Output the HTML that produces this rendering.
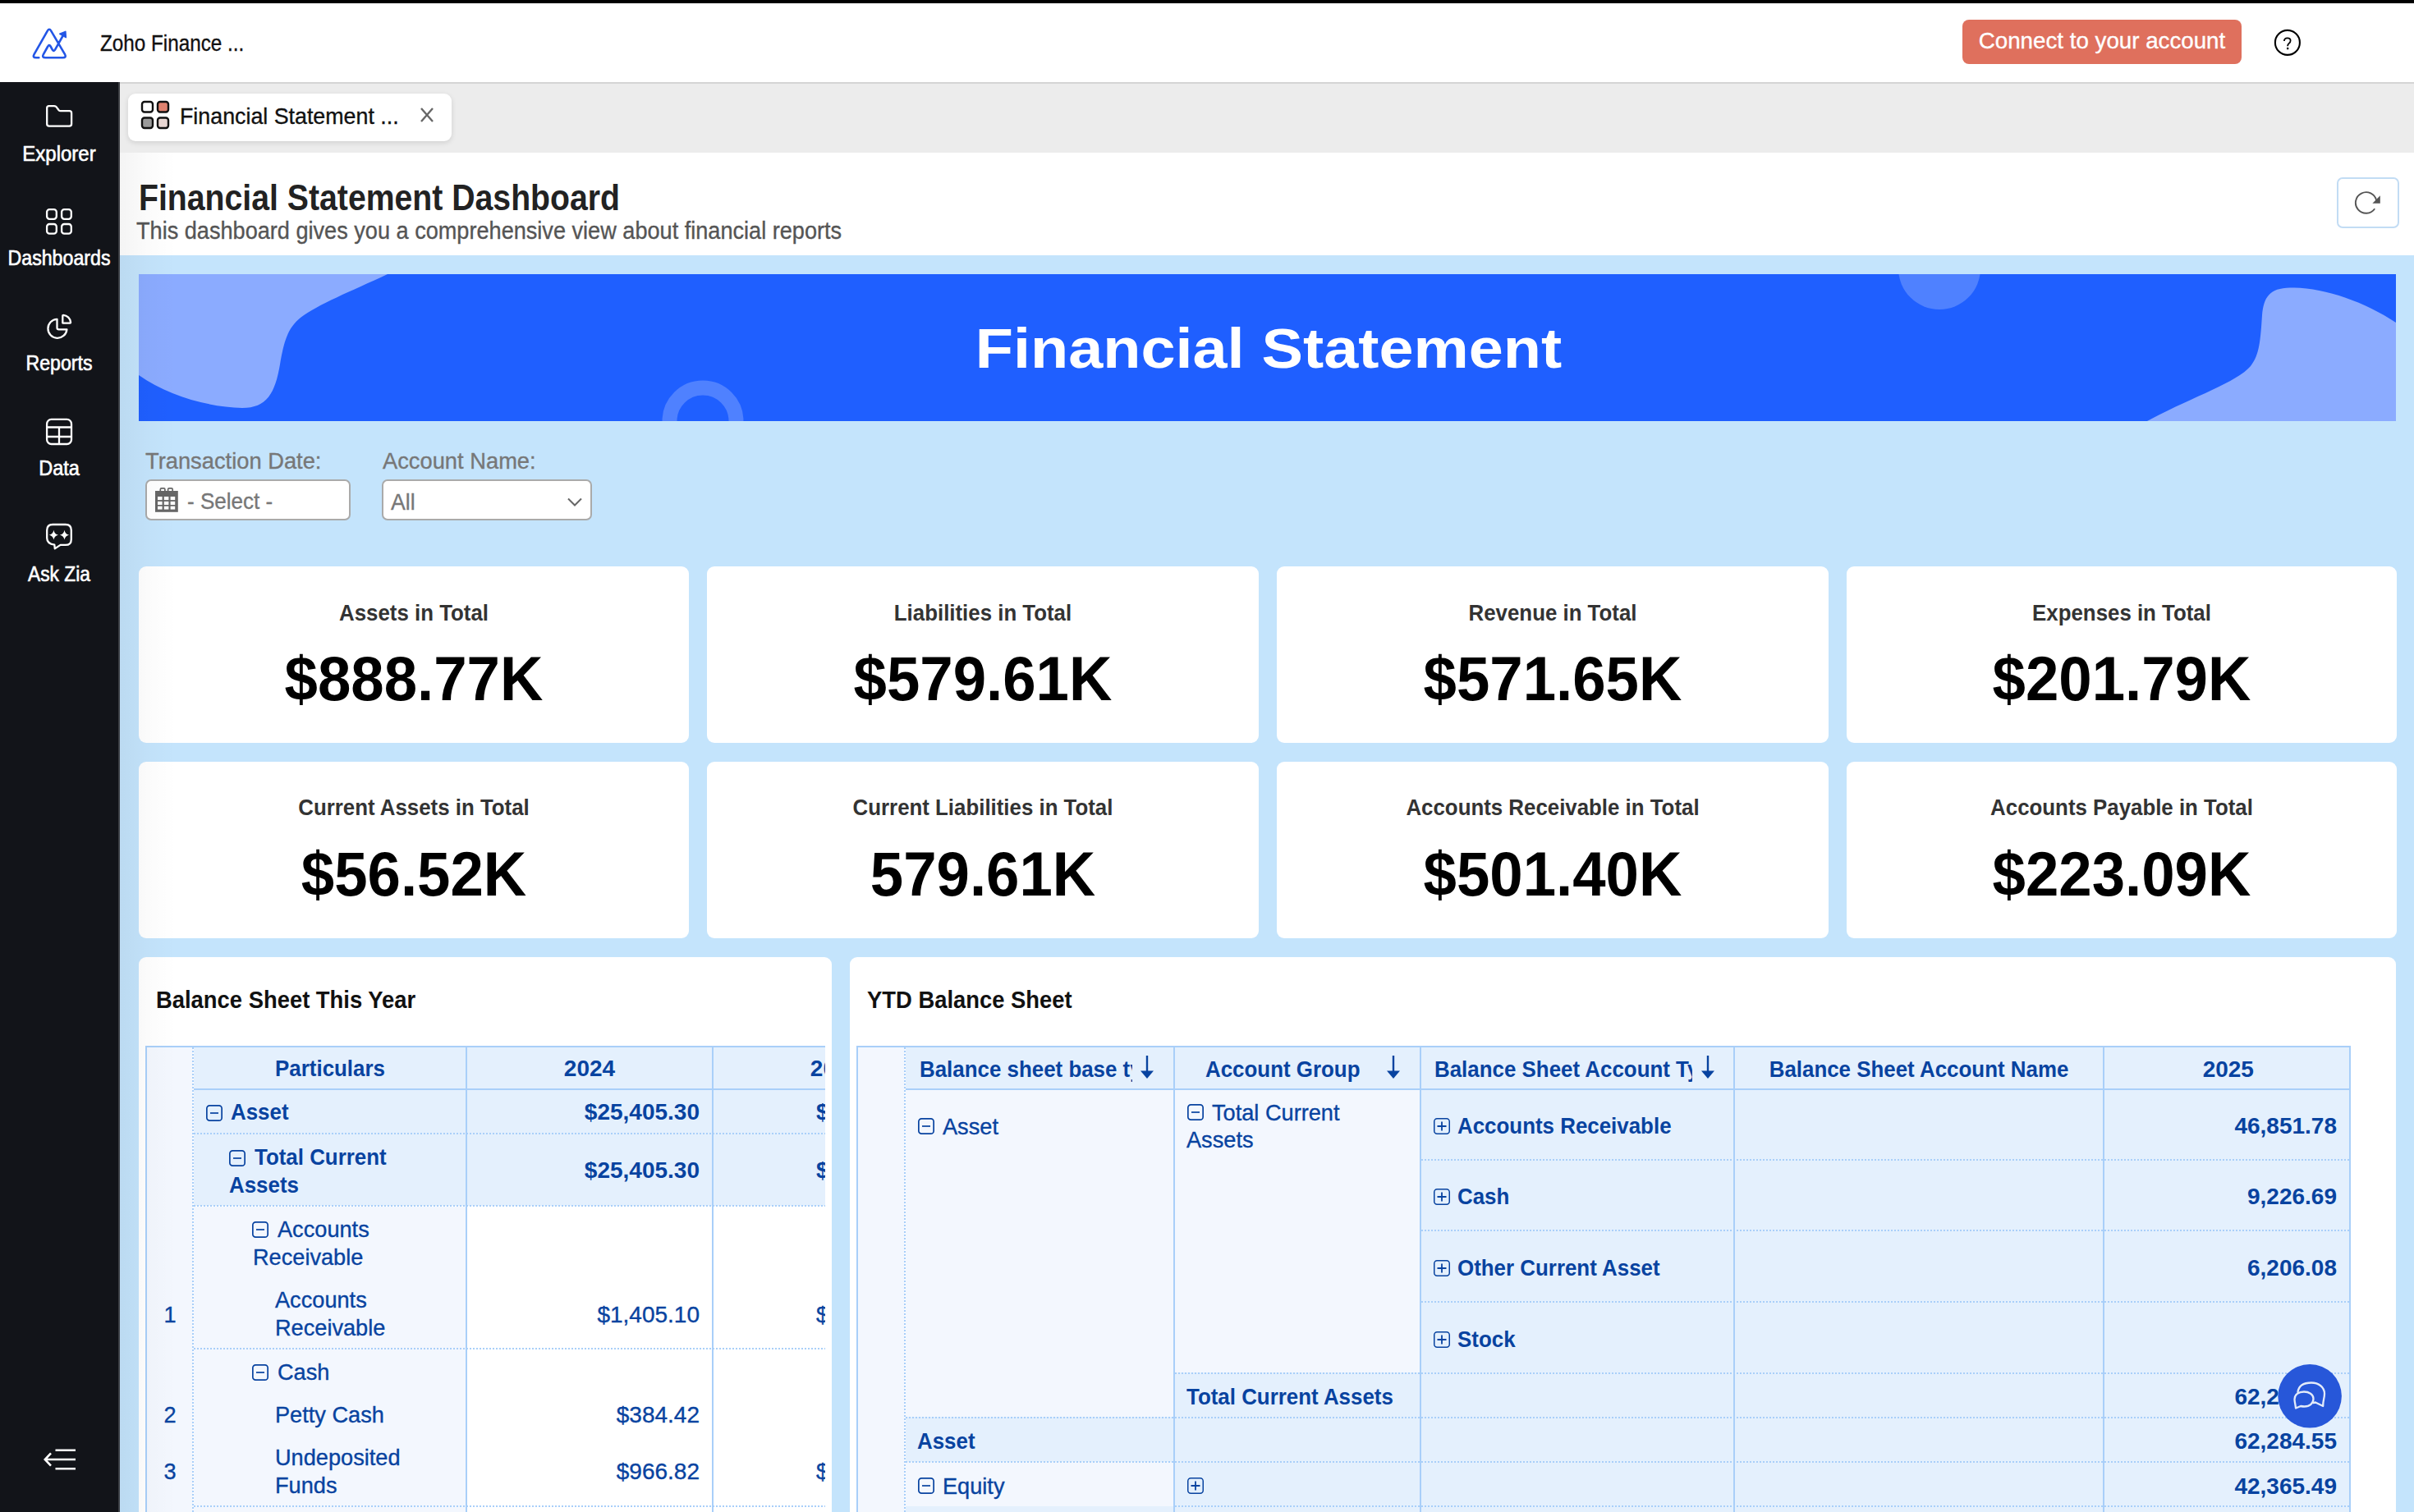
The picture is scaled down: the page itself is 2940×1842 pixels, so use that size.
<!DOCTYPE html>
<html><head><meta charset="utf-8"><title>Financial Statement Dashboard</title>
<style>
html,body{margin:0;padding:0;}
body{width:2940px;height:1842px;overflow:hidden;position:relative;background:#fff;font-family:"Liberation Sans",sans-serif;}
.t{position:absolute;white-space:nowrap;line-height:1;}
.r{position:absolute;box-sizing:border-box;}
svg{position:absolute;overflow:visible;}
</style></head><body>

<div class="r" style="left:0px;top:0px;width:2940px;height:4px;background:#000;"></div>
<div class="r" style="left:0px;top:100px;width:2940px;height:2px;background:#d4d4d4;"></div>
<svg style="left:0;top:0" width="140" height="100" viewBox="0 0 140 100">
<g fill="none" stroke="#2356e6" stroke-width="2.6" stroke-linejoin="round" stroke-linecap="round">
<path d="M47.3 70.3 L44 70.3 Q39.2 70.3 41.6 66.2 L57.8 37.6 Q60 34 62.2 37.6 L79 66.2 Q81.3 70.3 76.5 70.3 L55.5 70.3 Q50.6 70.3 52.9 66.2 L58 57 Q59.8 53.5 61.6 56.5 L64 60.8 Q65.5 63 67 60.6 L77.5 42"/>
</g>
<path d="M79.8 38.4 L72.8 41.3 L80.3 45.6 Z" fill="#2356e6" stroke="#2356e6" stroke-width="1.6" stroke-linejoin="round"/>
</svg>
<div class="t" style="left:122.0px;top:39.3px;font-size:28px;-webkit-text-stroke:0.35px #111;color:#111;transform-origin:0 0;transform:scaleX(0.866);">Zoho Finance ...</div>
<div class="r" style="left:2390px;top:24px;width:340px;height:54px;background:#df705d;border-radius:8px;"></div>
<div class="t" style="left:2560.0px;top:36.3px;font-size:28px;-webkit-text-stroke:0.35px #fff;color:#fff;transform:translateX(-50%) scaleX(0.99);">Connect to your account</div>
<svg style="left:2766px;top:32px" width="40" height="40" viewBox="0 0 40 40">
<circle cx="19.9" cy="19.9" r="15" fill="none" stroke="#000" stroke-width="2.1"/>
<path d="M15.9 18 Q16 14.3 19.8 14.3 Q23.6 14.3 23.6 17.6 Q23.6 19.7 21.6 21 Q20.1 22.2 20.1 24.3" fill="none" stroke="#000" stroke-width="1.8"/>
<rect x="19" y="25.9" width="2.3" height="2.3" fill="#000"/>
</svg>
<div class="r" style="left:0px;top:100px;width:144px;height:1742px;background:#121419;"></div>
<div class="r" style="left:144px;top:100px;width:2px;height:1742px;background:#3b3d42;"></div>
<div class="t" style="left:72.0px;top:174.8px;font-size:25px;color:#fff;transform:translateX(-50%) scaleX(0.96);-webkit-text-stroke:0.6px #fff;">Explorer</div>
<div class="t" style="left:72.0px;top:301.8px;font-size:25px;color:#fff;transform:translateX(-50%) scaleX(0.927);-webkit-text-stroke:0.6px #fff;">Dashboards</div>
<div class="t" style="left:72.0px;top:429.8px;font-size:25px;color:#fff;transform:translateX(-50%) scaleX(0.926);-webkit-text-stroke:0.6px #fff;">Reports</div>
<div class="t" style="left:72.0px;top:557.8px;font-size:25px;color:#fff;transform:translateX(-50%) scaleX(0.94);-webkit-text-stroke:0.6px #fff;">Data</div>
<div class="t" style="left:72.0px;top:686.8px;font-size:25px;color:#fff;transform:translateX(-50%) scaleX(0.91);-webkit-text-stroke:0.6px #fff;">Ask Zia</div>
<svg style="left:0;top:0" width="146" height="1842" viewBox="0 0 146 1842">
<g fill="none" stroke="#fff" stroke-width="2.3" stroke-linejoin="round" stroke-linecap="round">
<path d="M59.6 129.1 L65.8 129.1 Q67.2 129.1 68.3 129.9 L71.6 134.2 Q72.4 135.1 73.8 135.1 L84.5 135.1 Q87.1 135.1 87.1 137.7 L87.1 151.1 Q87.1 153.7 84.5 153.7 L59.8 153.7 Q57.2 153.7 57.2 151.1 L57.2 131.6 Q57.2 129.1 59.6 129.1 Z"/>
<rect x="57.1" y="255.1" width="11.7" height="11.7" rx="3.2"/><rect x="75.1" y="255.1" width="11.7" height="11.7" rx="3.2"/>
<rect x="57.1" y="273" width="11.7" height="11.7" rx="3.2"/><rect x="75.1" y="273" width="11.7" height="11.7" rx="3.2"/>
<path d="M69.5 388.8 A11.5 11.5 0 1 0 81.4 401.3 L71.6 401.3 Q69.5 401.3 69.5 399.2 Z"/>
<path d="M76.3 393.6 L76.3 384.6 Q76.3 383.8 77.1 383.8 A9.8 9.8 0 0 1 86.1 392.8 Q86.1 393.6 85.3 393.6 Z"/>
<rect x="57.1" y="510.9" width="29.9" height="30.1" rx="5.5"/>
<path d="M57.1 520.5 L87 520.5 M72 520.5 L72 541 M57.1 532 L87 532" stroke-linecap="butt"/>
<path d="M64.2 639 L79.8 639 Q86.8 639 86.8 646 L86.8 656.9 Q86.8 663.9 79.8 663.9 L73.6 663.9 L66.8 668.4 L66.3 663.6 Q57.2 662.4 57.2 655.4 L57.2 646 Q57.2 639 64.2 639 Z"/>
<path d="M55 1778 L92 1778 M67.5 1766.7 L92 1766.7 M67.5 1789.3 L92 1789.3 M62 1770.3 L54.8 1778 L62 1785.7" stroke-width="2.6" stroke-linecap="butt" stroke-linejoin="miter"/>
</g>
<g fill="#fff">
<path d="M65.4 645.8 Q66.2 650.8 71 651.7 Q66.2 652.6 65.4 657.6 Q64.6 652.6 59.8 651.7 Q64.6 650.8 65.4 645.8 Z"/>
<path d="M78.5 645.8 Q79.3 650.8 84.1 651.7 Q79.3 652.6 78.5 657.6 Q77.7 652.6 72.9 651.7 Q77.7 650.8 78.5 645.8 Z"/>
</g>
</svg>
<div class="r" style="left:146px;top:102px;width:2794px;height:84px;background:#ececec;"></div>
<div class="r" style="left:156px;top:114px;width:394px;height:58px;background:#fff;border-radius:9px;box-shadow:0 2px 6px rgba(0,0,0,0.12);"></div>
<svg style="left:0;top:0" width="560" height="180" viewBox="0 0 560 180">
<g stroke="#111" stroke-width="2.4">
<rect x="173" y="124" width="13" height="12.5" rx="3" fill="#fff"/>
<rect x="192" y="124" width="13" height="12.5" rx="3" fill="#e0826f"/>
<rect x="173" y="143.5" width="13" height="12.5" rx="3" fill="#9a9a9a"/>
<rect x="192" y="143.5" width="13" height="12.5" rx="3" fill="#e8d6d2"/>
</g>
<path d="M513 132 L527 148 M527 132 L513 148" stroke="#666" stroke-width="2.4"/>
</svg>
<div class="t" style="left:219.0px;top:127.7px;font-size:28px;-webkit-text-stroke:0.35px #111;color:#111;transform-origin:0 0;transform:scaleX(0.957);">Financial Statement ...</div>
<div class="t" style="left:169.0px;top:219.1px;font-size:44px;font-weight:700;color:#222;transform-origin:0 0;transform:scaleX(0.891);">Financial Statement Dashboard</div>
<div class="t" style="left:166.0px;top:267.4px;font-size:29px;-webkit-text-stroke:0.35px #555;color:#555;transform-origin:0 0;transform:scaleX(0.935);">This dashboard gives you a comprehensive view about financial reports</div>
<div class="r" style="left:2846px;top:216px;width:76px;height:62px;border:2px solid #c2dcf4;border-radius:7px;background:#fff;"></div>
<svg style="left:2846px;top:216px" width="76" height="62" viewBox="0 0 76 62">
<path d="M46.2 38.3 A12.8 12.8 0 1 1 48.2 28.3" fill="none" stroke="#555" stroke-width="1.9"/>
<path d="M52.8 22.3 L43.4 31.7 L52.8 31.7 Z" fill="#555"/>
</svg>
<div class="r" style="left:146px;top:311px;width:2794px;height:1531px;background:#c4e4fc;"></div>
<svg style="left:169px;top:334px" width="2749" height="179" viewBox="0 0 2749 179">
<defs><clipPath id="bc"><rect x="0" y="0" width="2749" height="179"/></clipPath></defs>
<rect x="0" y="0" width="2749" height="179" fill="#1f5fff"/>
<g clip-path="url(#bc)">
<path d="M0 0 L303 0 C258 21 218 37 197 53 C181 66 177 82 172 110 C166 145 156 163 126 163 C85 162 35 148 0 123 Z" fill="#8babff"/>
<circle cx="2193" cy="-7" r="50" fill="#4f81ff"/>
<path d="M2749 59 C2710 33 2660 16 2620 16.5 C2595 17 2588 28 2586 50 C2584 80 2583 98 2572 112 C2555 132 2500 150 2446 179 L2749 179 Z" fill="#8babff"/>
<circle cx="687" cy="179" r="40.5" fill="none" stroke="#4f81ff" stroke-width="18"/>
</g>
</svg>
<div class="t" style="left:1545.2px;top:390.2px;font-size:68px;font-weight:700;color:#fff;transform:translateX(-50%) scaleX(1.112);">Financial Statement</div>
<div class="t" style="left:177.0px;top:548.0px;font-size:28px;-webkit-text-stroke:0.35px #777;color:#777;transform-origin:0 0;transform:scaleX(0.975);">Transaction Date:</div>
<div class="t" style="left:465.6px;top:548.0px;font-size:28px;-webkit-text-stroke:0.35px #777;color:#777;transform-origin:0 0;transform:scaleX(0.975);">Account Name:</div>
<div class="r" style="left:177px;top:584px;width:250px;height:50px;background:#fff;border:2px solid #aaa;border-radius:7px;"></div>
<div class="r" style="left:465px;top:584px;width:256px;height:50px;background:#fff;border:2px solid #aaa;border-radius:7px;"></div>
<svg style="left:0;top:0" width="740" height="700" viewBox="0 0 740 700">
<rect x="189" y="598" width="27.8" height="25.8" fill="#666"/>
<path d="M195.3 598.5 L195.3 596.2 Q195.3 594.8 196.7 594.8 L199.5 594.8 Q200.9 594.8 200.9 596.2 L200.9 598.5 M204.6 598.5 L204.6 596.2 Q204.6 594.8 206 594.8 L208.8 594.8 Q210.2 594.8 210.2 596.2 L210.2 598.5" fill="none" stroke="#666" stroke-width="1.7"/>
<g fill="#fff">
<rect x="192" y="605" width="5.6" height="4.1"/><rect x="199.8" y="605" width="5.6" height="4.1"/><rect x="207.6" y="605" width="5.6" height="4.1"/>
<rect x="192" y="610.9" width="5.6" height="4.1"/><rect x="199.8" y="610.9" width="5.6" height="4.1"/><rect x="207.6" y="610.9" width="5.6" height="4.1"/>
<rect x="192" y="616.7" width="5.6" height="3.9"/><rect x="199.8" y="616.7" width="5.6" height="3.9"/><rect x="207.6" y="616.7" width="5.6" height="3.9"/>
</g>
<path d="M692 607.5 L700 615.5 L708 607.5" fill="none" stroke="#666" stroke-width="2"/>
</svg>
<div class="t" style="left:227.5px;top:597.1px;font-size:28px;-webkit-text-stroke:0.35px #777;color:#777;transform-origin:0 0;transform:scaleX(0.93);">- Select -</div>
<div class="t" style="left:475.6px;top:597.6px;font-size:28px;-webkit-text-stroke:0.35px #777;color:#777;transform-origin:0 0;transform:scaleX(0.95);">All</div>
<div class="r" style="left:169px;top:690px;width:670px;height:215px;background:#fff;border-radius:9px;"></div>
<div class="t" style="left:504.0px;top:732.9px;font-size:28px;font-weight:700;color:#333;transform:translateX(-50%) scaleX(0.923);">Assets in Total</div>
<div class="t" style="left:504.0px;top:789.1px;font-size:76px;font-weight:700;color:#000;transform:translateX(-50%) scaleX(0.955);">$888.77K</div>
<div class="r" style="left:861px;top:690px;width:672px;height:215px;background:#fff;border-radius:9px;"></div>
<div class="t" style="left:1197.0px;top:732.9px;font-size:28px;font-weight:700;color:#333;transform:translateX(-50%) scaleX(0.923);">Liabilities in Total</div>
<div class="t" style="left:1197.0px;top:789.1px;font-size:76px;font-weight:700;color:#000;transform:translateX(-50%) scaleX(0.955);">$579.61K</div>
<div class="r" style="left:1555px;top:690px;width:672px;height:215px;background:#fff;border-radius:9px;"></div>
<div class="t" style="left:1891.0px;top:732.9px;font-size:28px;font-weight:700;color:#333;transform:translateX(-50%) scaleX(0.923);">Revenue in Total</div>
<div class="t" style="left:1891.0px;top:789.1px;font-size:76px;font-weight:700;color:#000;transform:translateX(-50%) scaleX(0.955);">$571.65K</div>
<div class="r" style="left:2249px;top:690px;width:670px;height:215px;background:#fff;border-radius:9px;"></div>
<div class="t" style="left:2584.0px;top:732.9px;font-size:28px;font-weight:700;color:#333;transform:translateX(-50%) scaleX(0.923);">Expenses in Total</div>
<div class="t" style="left:2584.0px;top:789.1px;font-size:76px;font-weight:700;color:#000;transform:translateX(-50%) scaleX(0.955);">$201.79K</div>
<div class="r" style="left:169px;top:928px;width:670px;height:215px;background:#fff;border-radius:9px;"></div>
<div class="t" style="left:504.0px;top:970.3px;font-size:28px;font-weight:700;color:#333;transform:translateX(-50%) scaleX(0.923);">Current Assets in Total</div>
<div class="t" style="left:504.0px;top:1026.9px;font-size:76px;font-weight:700;color:#000;transform:translateX(-50%) scaleX(0.955);">$56.52K</div>
<div class="r" style="left:861px;top:928px;width:672px;height:215px;background:#fff;border-radius:9px;"></div>
<div class="t" style="left:1197.0px;top:970.3px;font-size:28px;font-weight:700;color:#333;transform:translateX(-50%) scaleX(0.923);">Current Liabilities in Total</div>
<div class="t" style="left:1197.0px;top:1026.9px;font-size:76px;font-weight:700;color:#000;transform:translateX(-50%) scaleX(0.955);">579.61K</div>
<div class="r" style="left:1555px;top:928px;width:672px;height:215px;background:#fff;border-radius:9px;"></div>
<div class="t" style="left:1891.0px;top:970.3px;font-size:28px;font-weight:700;color:#333;transform:translateX(-50%) scaleX(0.923);">Accounts Receivable in Total</div>
<div class="t" style="left:1891.0px;top:1026.9px;font-size:76px;font-weight:700;color:#000;transform:translateX(-50%) scaleX(0.955);">$501.40K</div>
<div class="r" style="left:2249px;top:928px;width:670px;height:215px;background:#fff;border-radius:9px;"></div>
<div class="t" style="left:2584.0px;top:970.3px;font-size:28px;font-weight:700;color:#333;transform:translateX(-50%) scaleX(0.923);">Accounts Payable in Total</div>
<div class="t" style="left:2584.0px;top:1026.9px;font-size:76px;font-weight:700;color:#000;transform:translateX(-50%) scaleX(0.955);">$223.09K</div>
<div class="r" style="left:169px;top:1166px;width:844px;height:734px;background:#fff;border-radius:9px;"></div>
<div class="r" style="left:1035px;top:1166px;width:1883px;height:734px;background:#fff;border-radius:9px;"></div>
<div class="t" style="left:190.0px;top:1202.6px;font-size:30px;font-weight:700;color:#111;transform-origin:0 0;transform:scaleX(0.913);">Balance Sheet This Year</div>
<div class="t" style="left:1056.0px;top:1203.1px;font-size:30px;font-weight:700;color:#111;transform-origin:0 0;transform:scaleX(0.913);">YTD Balance Sheet</div>
<div style="position:absolute;left:0;top:0;width:1005px;height:1842px;overflow:hidden;">
<div class="r" style="left:179px;top:1276px;width:56px;height:566px;background:#f3f7fe;"></div>
<div class="r" style="left:236px;top:1276px;width:964px;height:50px;background:#e4f0fd;"></div>
<div class="r" style="left:236px;top:1328px;width:964px;height:141px;background:#e4f0fd;"></div>
<div class="r" style="left:236px;top:1470px;width:331px;height:372px;background:#f3f7fe;"></div>
<div class="r" style="left:177px;top:1274px;width:2px;height:568px;background:#a9cff9;"></div>
<div class="r" style="left:177px;top:1274px;width:1023px;height:2px;background:#a9cff9;"></div>
<div class="r" style="left:234px;top:1276px;width:2px;height:566px;background:repeating-linear-gradient(180deg,#a9cff9 0 2px,transparent 2px 4px);"></div>
<div class="r" style="left:236px;top:1326px;width:964px;height:2px;background:#a9cff9;"></div>
<div class="r" style="left:567px;top:1276px;width:2px;height:566px;background:#a9cff9;"></div>
<div class="r" style="left:867px;top:1276px;width:2px;height:566px;background:#a9cff9;"></div>
<div class="r" style="left:1167px;top:1276px;width:2px;height:566px;background:#a9cff9;"></div>
<div class="r" style="left:236px;top:1380px;width:964px;height:2px;background:repeating-linear-gradient(90deg,#a9cff9 0 2px,transparent 2px 4px);"></div>
<div class="r" style="left:236px;top:1468px;width:964px;height:2px;background:repeating-linear-gradient(90deg,#a9cff9 0 2px,transparent 2px 4px);"></div>
<div class="r" style="left:236px;top:1642px;width:964px;height:2px;background:repeating-linear-gradient(90deg,#a9cff9 0 2px,transparent 2px 4px);"></div>
<div class="r" style="left:236px;top:1834px;width:964px;height:2px;background:repeating-linear-gradient(90deg,#a9cff9 0 2px,transparent 2px 4px);"></div>
<div class="t" style="left:402.0px;top:1288.3px;font-size:28px;font-weight:700;color:#0843a0;transform:translateX(-50%) scaleX(0.925);">Particulars</div>
<div class="t" style="left:718.0px;top:1288.3px;font-size:28px;font-weight:700;color:#0843a0;transform:translateX(-50%) scaleX(1.0);">2024</div>
<div class="t" style="left:1018.0px;top:1288.3px;font-size:28px;font-weight:700;color:#0843a0;transform:translateX(-50%) scaleX(1.0);">2025</div>
<svg style="left:251px;top:1346px" width="20" height="20" viewBox="0 0 20 20"><rect x="0.85" y="0.85" width="18.3" height="18.3" rx="3.5" fill="none" stroke="#0843a0" stroke-width="1.7"/><path d="M5 10 L15 10" stroke="#0843a0" stroke-width="1.7"/></svg>
<div class="t" style="left:281.0px;top:1341.3px;font-size:28px;font-weight:700;color:#0843a0;transform-origin:0 0;transform:scaleX(0.925);">Asset</div>
<div class="t" style="right:153.0px;top:1341.3px;font-size:28px;font-weight:700;color:#0843a0;">$25,405.30</div>
<div class="t" style="left:994.0px;top:1341.3px;font-size:28px;font-weight:700;color:#0843a0;">$62,284.55</div>
<svg style="left:279px;top:1400.5px" width="20" height="20" viewBox="0 0 20 20"><rect x="0.85" y="0.85" width="18.3" height="18.3" rx="3.5" fill="none" stroke="#0843a0" stroke-width="1.7"/><path d="M5 10 L15 10" stroke="#0843a0" stroke-width="1.7"/></svg>
<div class="t" style="left:309.6px;top:1396.1px;font-size:28px;font-weight:700;color:#0843a0;transform-origin:0 0;transform:scaleX(0.925);">Total Current</div>
<div class="t" style="left:279.4px;top:1430.0px;font-size:28px;font-weight:700;color:#0843a0;transform-origin:0 0;transform:scaleX(0.925);">Assets</div>
<div class="t" style="right:153.0px;top:1412.3px;font-size:28px;font-weight:700;color:#0843a0;">$25,405.30</div>
<div class="t" style="left:994.0px;top:1412.3px;font-size:28px;font-weight:700;color:#0843a0;">$62,284.55</div>
<svg style="left:307px;top:1488.3px" width="20" height="20" viewBox="0 0 20 20"><rect x="0.85" y="0.85" width="18.3" height="18.3" rx="3.5" fill="none" stroke="#0843a0" stroke-width="1.7"/><path d="M5 10 L15 10" stroke="#0843a0" stroke-width="1.7"/></svg>
<div class="t" style="left:337.5px;top:1484.0px;font-size:28px;-webkit-text-stroke:0.35px #0843a0;color:#0843a0;transform-origin:0 0;transform:scaleX(0.97);">Accounts</div>
<div class="t" style="left:307.7px;top:1517.6px;font-size:28px;-webkit-text-stroke:0.35px #0843a0;color:#0843a0;transform-origin:0 0;transform:scaleX(0.97);">Receivable</div>
<div class="t" style="left:335.3px;top:1569.7px;font-size:28px;-webkit-text-stroke:0.35px #0843a0;color:#0843a0;transform-origin:0 0;transform:scaleX(0.97);">Accounts</div>
<div class="t" style="left:335.3px;top:1603.8px;font-size:28px;-webkit-text-stroke:0.35px #0843a0;color:#0843a0;transform-origin:0 0;transform:scaleX(0.97);">Receivable</div>
<div class="t" style="left:207.0px;top:1587.8px;font-size:28px;-webkit-text-stroke:0.35px #0843a0;color:#0843a0;transform:translateX(-50%) scaleX(0.97);">1</div>
<div class="t" style="right:153.0px;top:1587.5px;font-size:28px;-webkit-text-stroke:0.35px #0843a0;color:#0843a0;">$1,405.10</div>
<div class="t" style="left:994.0px;top:1587.5px;font-size:28px;-webkit-text-stroke:0.35px #0843a0;color:#0843a0;">$1,405.10</div>
<svg style="left:307px;top:1662px" width="20" height="20" viewBox="0 0 20 20"><rect x="0.85" y="0.85" width="18.3" height="18.3" rx="3.5" fill="none" stroke="#0843a0" stroke-width="1.7"/><path d="M5 10 L15 10" stroke="#0843a0" stroke-width="1.7"/></svg>
<div class="t" style="left:337.5px;top:1658.1px;font-size:28px;-webkit-text-stroke:0.35px #0843a0;color:#0843a0;transform-origin:0 0;transform:scaleX(0.97);">Cash</div>
<div class="t" style="left:335.3px;top:1710.0px;font-size:28px;-webkit-text-stroke:0.35px #0843a0;color:#0843a0;transform-origin:0 0;transform:scaleX(0.97);">Petty Cash</div>
<div class="t" style="left:207.0px;top:1710.0px;font-size:28px;-webkit-text-stroke:0.35px #0843a0;color:#0843a0;transform:translateX(-50%) scaleX(0.97);">2</div>
<div class="t" style="right:153.0px;top:1709.8px;font-size:28px;-webkit-text-stroke:0.35px #0843a0;color:#0843a0;">$384.42</div>
<div class="t" style="left:335.3px;top:1761.9px;font-size:28px;-webkit-text-stroke:0.35px #0843a0;color:#0843a0;transform-origin:0 0;transform:scaleX(0.97);">Undeposited</div>
<div class="t" style="left:335.3px;top:1795.9px;font-size:28px;-webkit-text-stroke:0.35px #0843a0;color:#0843a0;transform-origin:0 0;transform:scaleX(0.97);">Funds</div>
<div class="t" style="left:207.0px;top:1779.1px;font-size:28px;-webkit-text-stroke:0.35px #0843a0;color:#0843a0;transform:translateX(-50%) scaleX(0.97);">3</div>
<div class="t" style="right:153.0px;top:1778.8px;font-size:28px;-webkit-text-stroke:0.35px #0843a0;color:#0843a0;">$966.82</div>
<div class="t" style="left:994.0px;top:1778.8px;font-size:28px;-webkit-text-stroke:0.35px #0843a0;color:#0843a0;">$966.82</div>
</div>
<div class="r" style="left:1045px;top:1276px;width:57px;height:566px;background:#f3f7fe;"></div>
<div class="r" style="left:1103px;top:1276px;width:1759px;height:50px;background:#e4f0fd;"></div>
<div class="r" style="left:1103px;top:1328px;width:327px;height:398px;background:#f3f7fe;"></div>
<div class="r" style="left:1431px;top:1328px;width:299px;height:344px;background:#f3f7fe;"></div>
<div class="r" style="left:1731px;top:1328px;width:1131px;height:344px;background:#e4f0fd;"></div>
<div class="r" style="left:1431px;top:1672px;width:1431px;height:54px;background:#e4f0fd;"></div>
<div class="r" style="left:1103px;top:1726px;width:1759px;height:55px;background:#e4f0fd;"></div>
<div class="r" style="left:1103px;top:1781px;width:327px;height:54px;background:#f3f7fe;"></div>
<div class="r" style="left:1431px;top:1781px;width:1431px;height:54px;background:#e4f0fd;"></div>
<div class="r" style="left:1103px;top:1835px;width:1759px;height:7px;background:#e4f0fd;"></div>
<div class="r" style="left:1043px;top:1274px;width:2px;height:568px;background:#a9cff9;"></div>
<div class="r" style="left:1043px;top:1274px;width:1820px;height:2px;background:#a9cff9;"></div>
<div class="r" style="left:1101px;top:1276px;width:2px;height:566px;background:repeating-linear-gradient(180deg,#a9cff9 0 2px,transparent 2px 4px);"></div>
<div class="r" style="left:1103px;top:1326px;width:1760px;height:2px;background:#a9cff9;"></div>
<div class="r" style="left:1429px;top:1276px;width:2px;height:566px;background:#a9cff9;"></div>
<div class="r" style="left:1729px;top:1276px;width:2px;height:566px;background:#a9cff9;"></div>
<div class="r" style="left:2111px;top:1276px;width:2px;height:566px;background:#a9cff9;"></div>
<div class="r" style="left:2561px;top:1276px;width:2px;height:566px;background:#a9cff9;"></div>
<div class="r" style="left:2861px;top:1276px;width:2px;height:566px;background:#a9cff9;"></div>
<div class="r" style="left:1731px;top:1412px;width:1130px;height:2px;background:repeating-linear-gradient(90deg,#a9cff9 0 2px,transparent 2px 4px);"></div>
<div class="r" style="left:1731px;top:1498px;width:1130px;height:2px;background:repeating-linear-gradient(90deg,#a9cff9 0 2px,transparent 2px 4px);"></div>
<div class="r" style="left:1731px;top:1585px;width:1130px;height:2px;background:repeating-linear-gradient(90deg,#a9cff9 0 2px,transparent 2px 4px);"></div>
<div class="r" style="left:1431px;top:1672px;width:1430px;height:2px;background:repeating-linear-gradient(90deg,#a9cff9 0 2px,transparent 2px 4px);"></div>
<div class="r" style="left:1103px;top:1726px;width:1758px;height:2px;background:repeating-linear-gradient(90deg,#a9cff9 0 2px,transparent 2px 4px);"></div>
<div class="r" style="left:1103px;top:1780px;width:1758px;height:2px;background:repeating-linear-gradient(90deg,#a9cff9 0 2px,transparent 2px 4px);"></div>
<div class="r" style="left:1431px;top:1834px;width:1430px;height:2px;background:repeating-linear-gradient(90deg,#a9cff9 0 2px,transparent 2px 4px);"></div>
<div style="position:absolute;left:1103px;top:1276px;width:276px;height:50px;overflow:hidden;">
<div class="t" style="left:16.5px;top:12.7px;font-size:28px;font-weight:700;color:#0843a0;transform-origin:0 0;transform:scaleX(0.925);">Balance sheet base type</div>
</div>
<svg style="left:1389px;top:1286px" width="16" height="28" viewBox="0 0 16 28"><path d="M8 0 L8 19.5" stroke="#0843a0" stroke-width="2.4"/><path d="M0 18.6 L16 18.6 L8 28 Z" fill="#0843a0"/></svg>
<div class="t" style="left:1468.0px;top:1288.7px;font-size:28px;font-weight:700;color:#0843a0;transform-origin:0 0;transform:scaleX(0.925);">Account Group</div>
<svg style="left:1688.6px;top:1286px" width="16" height="28" viewBox="0 0 16 28"><path d="M8 0 L8 19.5" stroke="#0843a0" stroke-width="2.4"/><path d="M0 18.6 L16 18.6 L8 28 Z" fill="#0843a0"/></svg>
<div style="position:absolute;left:1731px;top:1276px;width:330px;height:50px;overflow:hidden;">
<div class="t" style="left:16.4px;top:12.7px;font-size:28px;font-weight:700;color:#0843a0;transform-origin:0 0;transform:scaleX(0.925);">Balance Sheet Account Type</div>
</div>
<svg style="left:2071.5px;top:1286px" width="16" height="28" viewBox="0 0 16 28"><path d="M8 0 L8 19.5" stroke="#0843a0" stroke-width="2.4"/><path d="M0 18.6 L16 18.6 L8 28 Z" fill="#0843a0"/></svg>
<div class="t" style="left:2337.0px;top:1288.7px;font-size:28px;font-weight:700;color:#0843a0;transform:translateX(-50%) scaleX(0.925);">Balance Sheet Account Name</div>
<div class="t" style="left:2713.8px;top:1288.7px;font-size:28px;font-weight:700;color:#0843a0;transform:translateX(-50%) scaleX(1.0);">2025</div>
<svg style="left:1118px;top:1362px" width="20" height="20" viewBox="0 0 20 20"><rect x="0.85" y="0.85" width="18.3" height="18.3" rx="3.5" fill="none" stroke="#0843a0" stroke-width="1.7"/><path d="M5 10 L15 10" stroke="#0843a0" stroke-width="1.7"/></svg>
<div class="t" style="left:1147.6px;top:1359.3px;font-size:28px;-webkit-text-stroke:0.35px #0843a0;color:#0843a0;transform-origin:0 0;transform:scaleX(0.97);">Asset</div>
<svg style="left:1446px;top:1345px" width="20" height="20" viewBox="0 0 20 20"><rect x="0.85" y="0.85" width="18.3" height="18.3" rx="3.5" fill="none" stroke="#0843a0" stroke-width="1.7"/><path d="M5 10 L15 10" stroke="#0843a0" stroke-width="1.7"/></svg>
<div class="t" style="left:1475.7px;top:1341.7px;font-size:28px;-webkit-text-stroke:0.35px #0843a0;color:#0843a0;transform-origin:0 0;transform:scaleX(0.97);">Total Current</div>
<div class="t" style="left:1445.0px;top:1375.3px;font-size:28px;-webkit-text-stroke:0.35px #0843a0;color:#0843a0;transform-origin:0 0;transform:scaleX(0.97);">Assets</div>
<svg style="left:1746px;top:1362.4px" width="20" height="20" viewBox="0 0 20 20"><rect x="0.75" y="0.75" width="18.5" height="18.5" rx="3.5" fill="none" stroke="#0843a0" stroke-width="1.5"/><path d="M4.5 10 L15.5 10 M10 4.5 L10 15.5" stroke="#0843a0" stroke-width="1.8"/></svg>
<div class="t" style="left:1775.0px;top:1358.3px;font-size:28px;font-weight:700;color:#0843a0;transform-origin:0 0;transform:scaleX(0.925);">Accounts Receivable</div>
<div class="t" style="right:94.0px;top:1358.3px;font-size:28px;font-weight:700;color:#0843a0;">46,851.78</div>
<svg style="left:1746px;top:1447.7px" width="20" height="20" viewBox="0 0 20 20"><rect x="0.75" y="0.75" width="18.5" height="18.5" rx="3.5" fill="none" stroke="#0843a0" stroke-width="1.5"/><path d="M4.5 10 L15.5 10 M10 4.5 L10 15.5" stroke="#0843a0" stroke-width="1.8"/></svg>
<div class="t" style="left:1775.0px;top:1443.6px;font-size:28px;font-weight:700;color:#0843a0;transform-origin:0 0;transform:scaleX(0.925);">Cash</div>
<div class="t" style="right:94.0px;top:1443.6px;font-size:28px;font-weight:700;color:#0843a0;">9,226.69</div>
<svg style="left:1746px;top:1534.7px" width="20" height="20" viewBox="0 0 20 20"><rect x="0.75" y="0.75" width="18.5" height="18.5" rx="3.5" fill="none" stroke="#0843a0" stroke-width="1.5"/><path d="M4.5 10 L15.5 10 M10 4.5 L10 15.5" stroke="#0843a0" stroke-width="1.8"/></svg>
<div class="t" style="left:1775.0px;top:1530.6px;font-size:28px;font-weight:700;color:#0843a0;transform-origin:0 0;transform:scaleX(0.925);">Other Current Asset</div>
<div class="t" style="right:94.0px;top:1530.6px;font-size:28px;font-weight:700;color:#0843a0;">6,206.08</div>
<svg style="left:1746px;top:1621.7px" width="20" height="20" viewBox="0 0 20 20"><rect x="0.75" y="0.75" width="18.5" height="18.5" rx="3.5" fill="none" stroke="#0843a0" stroke-width="1.5"/><path d="M4.5 10 L15.5 10 M10 4.5 L10 15.5" stroke="#0843a0" stroke-width="1.8"/></svg>
<div class="t" style="left:1775.0px;top:1617.6px;font-size:28px;font-weight:700;color:#0843a0;transform-origin:0 0;transform:scaleX(0.925);">Stock</div>
<div class="t" style="left:1445.0px;top:1687.7px;font-size:28px;font-weight:700;color:#0843a0;transform-origin:0 0;transform:scaleX(0.925);">Total Current Assets</div>
<div class="t" style="right:94.0px;top:1687.7px;font-size:28px;font-weight:700;color:#0843a0;">62,284.55</div>
<div class="t" style="left:1117.0px;top:1742.0px;font-size:28px;font-weight:700;color:#0843a0;transform-origin:0 0;transform:scaleX(0.925);">Asset</div>
<div class="t" style="right:94.0px;top:1742.0px;font-size:28px;font-weight:700;color:#0843a0;">62,284.55</div>
<svg style="left:1118px;top:1800px" width="20" height="20" viewBox="0 0 20 20"><rect x="0.85" y="0.85" width="18.3" height="18.3" rx="3.5" fill="none" stroke="#0843a0" stroke-width="1.7"/><path d="M5 10 L15 10" stroke="#0843a0" stroke-width="1.7"/></svg>
<div class="t" style="left:1148.4px;top:1796.7px;font-size:28px;-webkit-text-stroke:0.35px #0843a0;color:#0843a0;transform-origin:0 0;transform:scaleX(0.97);">Equity</div>
<svg style="left:1446px;top:1800px" width="20" height="20" viewBox="0 0 20 20"><rect x="0.75" y="0.75" width="18.5" height="18.5" rx="3.5" fill="none" stroke="#0843a0" stroke-width="1.5"/><path d="M4.5 10 L15.5 10 M10 4.5 L10 15.5" stroke="#0843a0" stroke-width="1.8"/></svg>
<div class="t" style="right:94.0px;top:1796.7px;font-size:28px;font-weight:700;color:#0843a0;">42,365.49</div>
<svg style="left:2765px;top:1652px" width="100" height="100" viewBox="0 0 100 100">
<circle cx="48.1" cy="48.8" r="38.8" fill="#2757d9"/>
<g fill="none" stroke="#e3ebf9" stroke-width="2.3" stroke-linejoin="round" stroke-linecap="round">
<path d="M33.5 44 C34.5 36 41 32.5 50 32.5 C59 32.5 66 38 66 46 C66 51 64 54.5 64.2 61 L55 56.5 L52.5 57"/>
<path d="M52.5 52 C52.5 46.5 47 43.5 41 43.5 C34.5 43.5 29.5 47 29.5 52.5 C29.5 56 30.5 58 31 63.5 L37 61 C38.5 61.3 40 61.5 41.5 61.5 C48 61.5 52.5 57.5 52.5 52 Z"/>
</g>
</svg>
<div class="r" style="left:146px;top:186px;width:69px;height:1656px;background:linear-gradient(90deg,rgba(0,0,0,0.045),rgba(0,0,0,0.015) 50%,rgba(0,0,0,0));"></div>
</body></html>
